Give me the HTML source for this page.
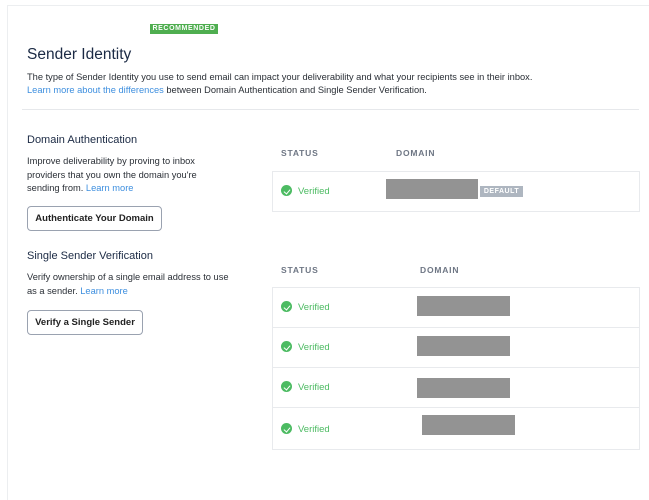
<!DOCTYPE html>
<html><head><meta charset="utf-8"><style>
*{margin:0;padding:0;box-sizing:border-box}
html,body{width:649px;height:500px;overflow:hidden}
body{background:#fff;font-family:"Liberation Sans",sans-serif;color:#263446;position:relative}
.a{position:absolute;white-space:nowrap}
.frame{position:absolute;left:7px;top:5px;width:642px;height:495px;border-left:1px solid #eceef0;border-top:1px solid #eceef0}
.badge{background:#4fae50;color:#fff;font-weight:bold;font-size:7px;letter-spacing:.6px;left:150px;top:24px;width:68px;height:10px;line-height:10px;text-align:center}
.t{font-size:9.3px;color:#2a2f36}
.lk{color:#3e8fdf}
h3{font-size:11px;font-weight:bold;color:#1b2a44;position:absolute;white-space:nowrap;-webkit-text-stroke:0}
.btn{position:absolute;border:1px solid #9aa2b0;border-radius:4px;font-size:9.5px;font-weight:bold;color:#222;text-align:center;background:#fff}
.hd{font-size:8.5px;font-weight:bold;color:#6e7684;letter-spacing:.8px}
.row{position:absolute;left:272px;width:368px;border:1px solid #e8eaed;height:41px}
.st{position:absolute;left:8px;top:13px;font-size:9.5px;color:#4cbb62;line-height:12px}
.st i{display:inline-block;width:11px;height:11px;border-radius:50%;background:#4cbb62;vertical-align:-2px;margin-right:6px;position:relative}
.st i:after{content:"";position:absolute;left:4px;top:2.5px;width:3px;height:5px;border:solid #fff;border-width:0 1px 1px 0;transform:rotate(40deg)}
.g{position:absolute;background:#939393;height:20px;width:93px}
</style></head><body>
<div class="frame"></div>
<div class="a badge">RECOMMENDED</div>
<div class="a" style="left:27px;top:46px;font-size:15.5px;color:#1b2a44">Sender Identity</div>
<div class="a t" style="left:27px;top:72px">The type of Sender Identity you use to send email can impact your deliverability and what your recipients see in their inbox.</div>
<div class="a t" style="left:27px;top:85px"><span class="lk">Learn more about the differences</span> between Domain Authentication and Single Sender Verification.</div>
<div class="a" style="left:22px;top:109px;width:617px;height:1px;background:#e6e8eb"></div>
<h3 style="left:27px;top:134px;font-weight:normal">Domain Authentication</h3>
<div class="a t" style="left:27px;top:155px;line-height:13.5px">Improve deliverability by proving to inbox<br>providers that you own the domain you're<br>sending from. <span class="lk">Learn more</span></div>
<div class="btn" style="left:27px;top:206px;width:135px;height:25px;line-height:23px">Authenticate Your Domain</div>
<h3 style="left:27px;top:250px;font-weight:normal">Single Sender Verification</h3>
<div class="a t" style="left:27px;top:271px;line-height:13.5px">Verify ownership of a single email address to use<br>as a sender. <span class="lk">Learn more</span></div>
<div class="btn" style="left:27px;top:310px;width:116px;height:25px;line-height:23px">Verify a Single Sender</div>

<div class="a hd" style="left:281px;top:148px">STATUS</div>
<div class="a hd" style="left:396px;top:148px">DOMAIN</div>
<div class="row" style="top:171px"><div class="st"><i></i>Verified</div></div>
<div class="g" style="left:386px;top:179px;width:92px"></div>
<div class="a" style="left:480px;top:186px;width:43px;height:11px;background:#aeb6c0;color:#fff;font-size:7px;font-weight:bold;line-height:11px;text-align:center;letter-spacing:.5px">DEFAULT</div>

<div class="a hd" style="left:281px;top:265px">STATUS</div>
<div class="a hd" style="left:420px;top:265px">DOMAIN</div>
<div class="row" style="top:287px"><div class="st"><i></i>Verified</div></div>
<div class="row" style="top:327px"><div class="st"><i></i>Verified</div></div>
<div class="row" style="top:367px"><div class="st"><i></i>Verified</div></div>
<div class="row" style="top:407px;height:43px"><div class="st" style="top:15px"><i></i>Verified</div></div>
<div class="g" style="left:417px;top:296px"></div>
<div class="g" style="left:417px;top:336px"></div>
<div class="g" style="left:417px;top:378px"></div>
<div class="g" style="left:422px;top:415px"></div>
</body></html>
